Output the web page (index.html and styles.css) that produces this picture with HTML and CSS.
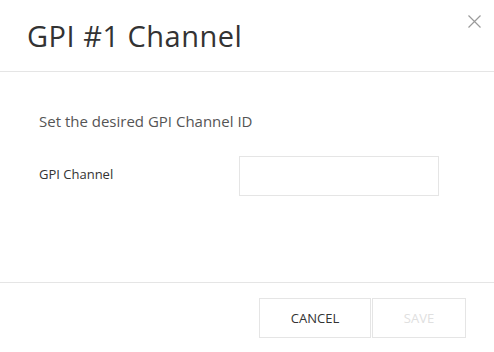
FILE: index.html
```html
<!DOCTYPE html>
<html lang="en">
<head>
    <meta charset="UTF-8">
    <title>GPI #1 Channel</title>
    <link rel="stylesheet" href="styles.css">
</head>
<body>
    <div class="modal">
        <div class="modal-header">
            <h1 class="modal-title">GPI #1 Channel</h1>
            <button class="close-btn" aria-label="Close">
                <svg width="13" height="13" viewBox="0 0 13 13">
                    <path d="M0.5 0.5 L12.5 12.5 M12.5 0.5 L0.5 12.5" stroke="#9a9a9a" stroke-width="1.2" fill="none"/>
                </svg>
            </button>
        </div>
        <div class="modal-body">
            <p class="intro">Set the desired GPI Channel ID</p>
            <div class="field">
                <label for="gpi-channel">GPI Channel</label>
                <input type="text" id="gpi-channel">
            </div>
        </div>
        <div class="modal-footer">
            <button class="btn">CANCEL</button>
            <button class="btn" disabled>SAVE</button>
        </div>
    </div>
</body>
</html>
```

FILE: styles.css
```css
* {
    margin: 0;
    padding: 0;
    box-sizing: border-box;
}
body {
    font-family: "Open Sans", "Noto Sans", sans-serif;
    background: #fff;
    color: #333;
    width: 494px;
    height: 352px;
    overflow: hidden;
}
.modal {
    display: flex;
    flex-direction: column;
    height: 352px;
}
.modal-header {
    position: relative;
    height: 72px;
    border-bottom: 1px solid #e5e5e5;
    padding: 16px 0 0 27px;
}
.modal-title {
    font-size: 29px;
    font-weight: 400;
    letter-spacing: 0.5px;
    line-height: 40px;
    color: #333;
}
.close-btn {
    position: absolute;
    top: 15px;
    right: 13px;
    border: none;
    background: none;
    width: 13px;
    height: 13px;
    cursor: pointer;
}
.close-btn svg {
    display: block;
}
.modal-body {
    flex: 1;
    padding: 38px 39px 0;
}
.intro {
    font-size: 15px;
    line-height: 22px;
    color: #555;
}
.field {
    display: flex;
    align-items: center;
    margin-top: 24px;
}
.field label {
    width: 200px;
    font-size: 13px;
    padding-bottom: 5px;
    color: #333;
}
.field input {
    width: 200px;
    height: 40px;
    border: 1px solid #e5e5e5;
    outline: none;
}
.modal-footer {
    height: 70px;
    border-top: 1px solid #e5e5e5;
    display: flex;
    justify-content: flex-end;
    align-items: flex-start;
    gap: 1px;
    padding: 15px 28px 0 0;
}
.btn {
    height: 40px;
    padding: 0 30px;
    border: 1px solid #e5e5e5;
    background: #fff;
    font-family: inherit;
    font-size: 13px;
    color: #333;
    cursor: pointer;
}
.btn:first-child {
    width: 112px;
}
.btn:disabled {
    width: 94px;
    color: #e0e0e0;
    cursor: default;
}
```
